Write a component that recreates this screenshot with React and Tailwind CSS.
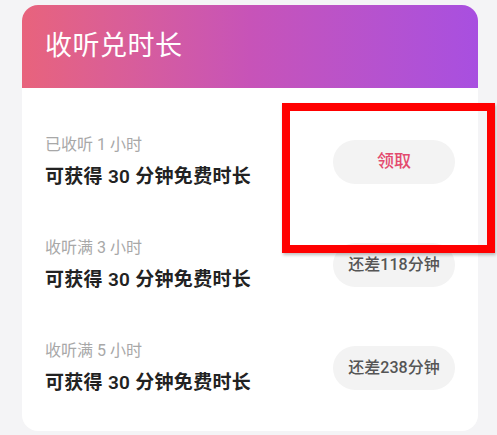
import React from "react";

const rows = [
  { label: "已收听 1 小时", action: "领取", ready: true },
  { label: "收听满 3 小时", action: "还差118分钟", ready: false },
  { label: "收听满 5 小时", action: "还差238分钟", ready: false },
];

export default function App() {
  return (
    <div
      className="relative w-[497px] h-[435px] overflow-hidden bg-[#f4f4f6] pt-[5px] px-[22px]"
      style={{ fontFamily: "Roboto, 'Noto Sans CJK SC', sans-serif" }}
    >
      {/* Card */}
      <div className="w-[456px] rounded-[16px] bg-white overflow-hidden">
        <div className="h-[83px] flex items-center px-[23px] bg-gradient-to-r from-[#e8637c] via-[#c753b8] to-[#a84fe0]">
          <h1 className="text-[27px] text-white tracking-[0.5px]">收听兑时长</h1>
        </div>

        <div className="pt-[22px] pb-[12px]">
          {rows.map((row) => (
            <div key={row.label} className="h-[103px] flex items-center justify-between pl-[23px] pr-[23px]">
              <div className="flex flex-col">
                <span className="text-[16px] leading-[24px] text-[#a8a8a8]">{row.label}</span>
                <span className="mt-[7px] text-[19px] leading-[26px] font-semibold text-[#222] tracking-[0.3px]">
                  可获得 30 分钟免费时长
                </span>
              </div>
              <button
                className={
                  row.ready
                    ? "w-[122px] h-[44px] rounded-full bg-[#f3f3f3] text-[17px] font-medium text-[#e34a6e]"
                    : "w-[122px] h-[44px] rounded-full bg-[#f3f3f3] text-[16px] font-medium text-[#555]"
                }
              >
                {row.action}
              </button>
            </div>
          ))}
        </div>
      </div>

      {/* Red annotation box */}
      <div className="absolute left-[282px] top-[103px] w-[213px] h-[150px] border-[8px] border-[#ff0000] shadow-[1px_2px_3px_rgba(0,0,0,0.25)]" />
    </div>
  );
}
